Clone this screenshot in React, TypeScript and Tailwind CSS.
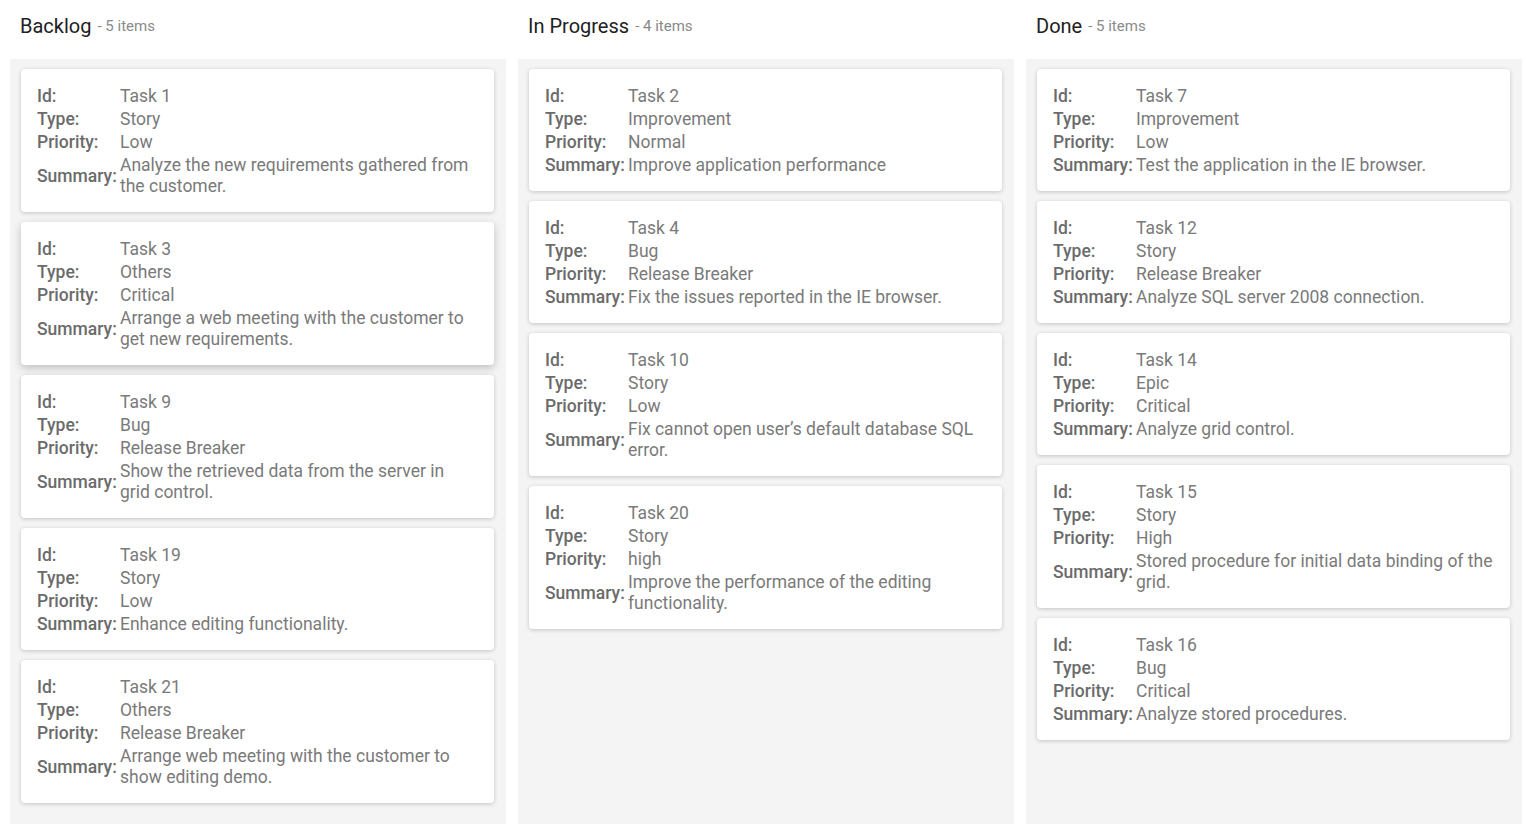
import React from "react";

type Task = { id: string; type: string; priority: string; summary: string; hover?: boolean };

const columns: { title: string; tasks: Task[] }[] = [
  {
    title: "Backlog",
    tasks: [
      { id: "Task 1", type: "Story", priority: "Low", summary: "Analyze the new requirements gathered from the customer." },
      { id: "Task 3", type: "Others", priority: "Critical", summary: "Arrange a web meeting with the customer to get new requirements.", hover: true },
      { id: "Task 9", type: "Bug", priority: "Release Breaker", summary: "Show the retrieved data from the server in grid control." },
      { id: "Task 19", type: "Story", priority: "Low", summary: "Enhance editing functionality." },
      { id: "Task 21", type: "Others", priority: "Release Breaker", summary: "Arrange web meeting with the customer to show editing demo." },
    ],
  },
  {
    title: "In Progress",
    tasks: [
      { id: "Task 2", type: "Improvement", priority: "Normal", summary: "Improve application performance" },
      { id: "Task 4", type: "Bug", priority: "Release Breaker", summary: "Fix the issues reported in the IE browser." },
      { id: "Task 10", type: "Story", priority: "Low", summary: "Fix cannot open user\u2019s default database SQL error." },
      { id: "Task 20", type: "Story", priority: "high", summary: "Improve the performance of the editing functionality." },
    ],
  },
  {
    title: "Done",
    tasks: [
      { id: "Task 7", type: "Improvement", priority: "Low", summary: "Test the application in the IE browser." },
      { id: "Task 12", type: "Story", priority: "Release Breaker", summary: "Analyze SQL server 2008 connection." },
      { id: "Task 14", type: "Epic", priority: "Critical", summary: "Analyze grid control." },
      { id: "Task 15", type: "Story", priority: "High", summary: "Stored procedure for initial data binding of the grid." },
      { id: "Task 16", type: "Bug", priority: "Critical", summary: "Analyze stored procedures." },
    ],
  },
];

function Row({ label, value }: { label: string; value: string }) {
  return (
    <div className="flex items-center py-px">
      <div className="w-[83px] shrink-0 font-medium text-[#6b6b6b]">{label}</div>
      <div className="flex-1 text-[#7a7a7a]">{value}</div>
    </div>
  );
}

function Card({ t }: { t: Task }) {
  return (
    <div
      className={
        "bg-white rounded-[4px] pl-4 pr-4 pt-[16px] pb-[14px] " +
        (t.hover
          ? "shadow-[0_3px_8px_rgba(0,0,0,0.22)]"
          : "shadow-[0_1px_4px_rgba(0,0,0,0.2)]")
      }
    >
      <Row label="Id:" value={t.id} />
      <Row label="Type:" value={t.type} />
      <Row label="Priority:" value={t.priority} />
      <Row label="Summary:" value={t.summary} />
    </div>
  );
}

export default function App() {
  return (
    <div
      className="w-[1532px] h-[832px] bg-white flex gap-3 pl-[10px] pr-[10px] pb-2 text-[17.5px] leading-[21px]"
      style={{ fontFamily: "Roboto, 'Noto Sans', sans-serif" }}
    >
      {columns.map((c) => (
        <div key={c.title} className="flex-1 flex flex-col min-w-0">
          <div className="h-[59px] flex items-center pl-[10px] pb-[7px]">
            <span className="text-[20px] text-[#212121]">{c.title}</span>
            <span className="text-[15px] text-[#8a8a8a] ml-[6px] mt-[1px]">- {c.tasks.length} items</span>
          </div>
          <div className="flex-1 bg-[#f4f4f4] pt-[10px] pl-[11px] pr-[12px] flex flex-col gap-[10px]">
            {c.tasks.map((t) => (
              <Card key={t.id} t={t} />
            ))}
          </div>
        </div>
      ))}
    </div>
  );
}
